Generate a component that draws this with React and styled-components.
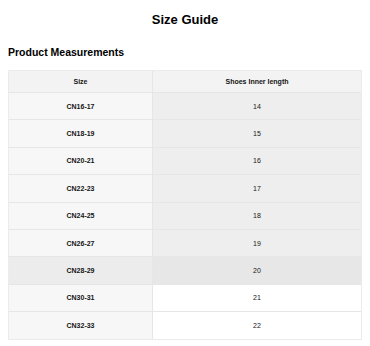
import React from 'react';
import styled, { createGlobalStyle } from 'styled-components';

const GlobalStyle = createGlobalStyle`
  body {
    margin: 8px;
    background: #ffffff;
    font-family: 'Liberation Sans', Arial, sans-serif;
    color: #111111;
  }
`;

const Page = styled.div`
  display: flex;
  flex-direction: column;
`;

const Title = styled.h1`
  margin: 4px 0 0;
  font-size: 13px;
  line-height: 15px;
  font-weight: 700;
  text-align: center;
  color: #000000;
`;

const Subtitle = styled.h2`
  margin: 18px 0 0;
  font-size: 10.5px;
  line-height: 14px;
  font-weight: 700;
  color: #000000;
`;

const Table = styled.div`
  margin-top: 11px;
  display: grid;
  grid-template-columns: 143px 1fr;
  grid-template-rows: 21px;
  grid-auto-rows: 26.4px;
  gap: 1px;
  background: #e6e6e6;
  border: 1px solid #ebebeb;
`;

const Cell = styled.div`
  display: flex;
  align-items: center;
  justify-content: center;
  font-size: 7px;
  color: #151515;
  font-weight: ${(p) => (p.bold ? 700 : 400)};
  background: ${(p) => p.bg};
`;

const rows = [
  ['CN16-17', '14'],
  ['CN18-19', '15'],
  ['CN20-21', '16'],
  ['CN22-23', '17'],
  ['CN24-25', '18'],
  ['CN26-27', '19'],
  ['CN28-29', '20'],
  ['CN30-31', '21'],
  ['CN32-33', '22'],
];

export default function App() {
  return (
    <>
      <GlobalStyle />
      <Page>
        <Title>Size Guide</Title>
        <Subtitle>Product Measurements</Subtitle>
        <Table>
          <Cell bold bg="#f3f3f3">Size</Cell>
          <Cell bold bg="#f3f3f3">Shoes Inner length</Cell>
          {rows.map(([size, len], i) => {
            const hover = i === 6;
            const leftBg = hover ? '#ececec' : '#f7f7f7';
            const rightBg = hover ? '#e7e7e7' : i < 6 ? '#eeeeee' : '#ffffff';
            return (
              <React.Fragment key={size}>
                <Cell bold bg={leftBg}>{size}</Cell>
                <Cell bg={rightBg}>{len}</Cell>
              </React.Fragment>
            );
          })}
        </Table>
      </Page>
    </>
  );
}
